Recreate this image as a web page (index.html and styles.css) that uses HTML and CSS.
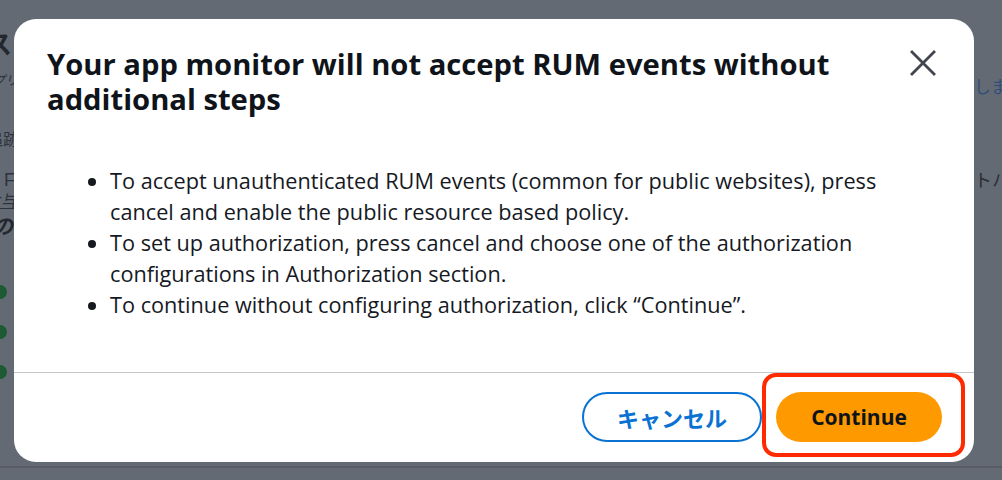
FILE: index.html
```html
<!DOCTYPE html>
<html lang="en">
<head>
<meta charset="utf-8">
<title>RUM events</title>
<link rel="stylesheet" href="styles.css">
</head>
<body>
<div class="backdrop">
  <div class="strip strip-left">
    <div class="frag f-su">ス</div>
    <div class="frag f-pu">アプリ</div>
    <div class="frag f-tsui">追跡</div>
    <div class="frag f-f">F</div>
    <div class="frag f-yo">付与</div>
    <div class="frag f-no">の</div>
    <div class="dot"></div>
    <div class="dot"></div>
    <div class="dot"></div>
  </div>
  <div class="strip-gap"></div>
  <div class="strip strip-right">
    <div class="frag f-shima">します</div>
    <div class="frag f-to">トハ</div>
  </div>
</div>
<div class="bottom-line"></div>

<div class="modal" role="dialog" aria-labelledby="mtitle">
  <div class="modal-header">
    <h2 id="mtitle" class="modal-title">Your app monitor will not accept RUM events without<br>additional steps</h2>
    <button class="close" aria-label="Close">
      <svg viewBox="0 0 26 26" width="26" height="26"><path d="M2 2 L24 24 M24 2 L2 24" stroke="#424650" stroke-width="2.8" fill="none" stroke-linecap="square"/></svg>
    </button>
  </div>
  <div class="modal-body">
    <ul class="steps">
      <li>To accept unauthenticated RUM events (common for public websites), press<br>cancel and enable the public resource based policy.</li>
      <li>To set up authorization, press cancel and choose one of the authorization<br>configurations in Authorization section.</li>
      <li>To continue without configuring authorization, click “Continue”.</li>
    </ul>
  </div>
  <div class="modal-footer">
    <button class="btn btn-cancel">キャンセル</button>
    <button class="btn btn-primary">Continue</button>
    <div class="highlight"></div>
  </div>
</div>
</body>
</html>
```

FILE: styles.css
```css
* { box-sizing: border-box; }
html, body {
  margin: 0;
  padding: 0;
  width: 1002px;
  height: 480px;
  overflow: hidden;
}
body {
  background: #646a74;
  font-family: "Open Sans", "Noto Sans CJK JP", sans-serif;
  position: relative;
}

/* background page fragments (under overlay) */
.backdrop {
  display: flex;
  height: 466px;
}
.strip {
  display: flex;
  flex-direction: column;
  overflow: hidden;
}
.strip-left {
  width: 14px;
  align-items: flex-end;
}
.strip-gap { flex: 1; }
.strip-right {
  width: 28px;
  align-items: flex-start;
}
.frag {
  white-space: nowrap;
  font-family: "Noto Sans CJK JP", sans-serif;
  color: #2e333b;
  line-height: 1;
}
.f-su { margin-top: 30px; font-size: 26px; font-weight: 700; color: #23272e; margin-right: 2px; }
.f-pu { margin-top: 17px; font-size: 13px; font-style: italic; margin-right: -4px; }
.f-tsui { margin-top: 44px; font-size: 16px; margin-right: -5px; }
.f-f { margin-top: 25px; font-size: 18px; font-family: "Liberation Sans", sans-serif; margin-right: -1px; }
.f-yo { margin-top: 3px; font-size: 16px; text-decoration: underline; margin-right: -4px; }
.f-no { margin-top: 7px; font-size: 21px; font-weight: 700; font-style: italic; color: #23272e; margin-right: 1px; }
.dot {
  width: 14px;
  height: 14px;
  border-radius: 50%;
  background: #1c5a33;
  margin-top: 26px;
  margin-right: 7px;
}
.f-no + .dot { margin-top: 49px; }
.f-shima { margin-top: 77px; font-size: 17px; color: #2f4e78; }
.f-to { margin-top: 76px; font-size: 18px; color: #2a2e35; }

.bottom-line {
  height: 2px;
  background: #565b64;
}

/* modal overlay */
.modal {
  position: absolute;
  left: 14px;
  top: 19px;
  width: 960px;
  height: 443px;
  background: #ffffff;
  border-radius: 22px;
  display: flex;
  flex-direction: column;
  color: #0f141a;
}
.modal-header {
  display: flex;
  justify-content: space-between;
  align-items: flex-start;
  padding: 28px 32px 0 33px;
}
.modal-title {
  margin: 0;
  font-size: 29.2px;
  line-height: 35px;
  font-weight: 700;
  color: #0f141a;
}
.close {
  border: 0;
  background: none;
  padding: 0;
  margin-top: 2px;
  margin-right: 5px;
  width: 28px;
  height: 28px;
  display: flex;
  align-items: center;
  justify-content: center;
}
.modal-body {
  flex: 1;
  padding: 48px 32px 0 33px;
}
.steps {
  margin: 0;
  padding-left: 63px;
  font-size: 21.7px;
  line-height: 31px;
  color: #16191f;
}
.modal-footer {
  position: relative;
  border-top: 1px solid #c6c6cd;
  display: flex;
  justify-content: flex-end;
  gap: 14px;
  padding: 19px 32px 20px;
}
.btn {
  height: 50px;
  border-radius: 25px;
  font-family: "Open Sans", "Noto Sans CJK JP", sans-serif;
  font-size: 21px;
  font-weight: 700;
  cursor: pointer;
}
.btn-cancel {
  width: 180px;
  background: #ffffff;
  border: 2px solid #0972d3;
  color: #0972d3;
  font-family: "Noto Sans CJK JP", sans-serif;
  font-size: 22px;
}
.btn-primary {
  width: 166px;
  background: #ff9900;
  border: 0;
  color: #0f141a;
}
.highlight {
  position: absolute;
  left: 748px;
  top: 0;
  width: 203px;
  height: 84px;
  border: 4px solid #ff2a00;
  border-radius: 14px;
  pointer-events: none;
}
```
